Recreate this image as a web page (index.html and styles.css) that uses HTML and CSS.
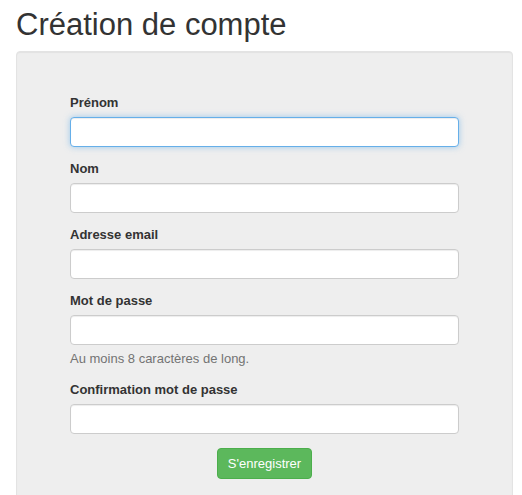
FILE: index.html
```html
<!DOCTYPE html>
<html lang="fr">
<head>
<meta charset="utf-8">
<title>Création de compte</title>
<link rel="stylesheet" href="styles.css">
</head>
<body>
<h1 class="page-title">Création de compte</h1>
<div class="well">
  <form class="signup-form">
    <div class="form-group">
      <label class="form-label" for="prenom">Prénom</label>
      <input class="form-control is-focused" id="prenom" type="text">
    </div>
    <div class="form-group">
      <label class="form-label" for="nom">Nom</label>
      <input class="form-control" id="nom" type="text">
    </div>
    <div class="form-group">
      <label class="form-label" for="email">Adresse email</label>
      <input class="form-control" id="email" type="email">
    </div>
    <div class="form-group">
      <label class="form-label" for="pw">Mot de passe</label>
      <input class="form-control" id="pw" type="password">
      <p class="help-block">Au moins 8 caractères de long.</p>
    </div>
    <div class="form-group">
      <label class="form-label" for="pw2">Confirmation mot de passe</label>
      <input class="form-control" id="pw2" type="password">
    </div>
    <div class="form-actions">
      <button class="btn-success" type="button">S'enregistrer</button>
    </div>
  </form>
</div>
</body>
</html>
```
FILE: styles.css
```css
* { box-sizing: border-box; }
html, body { height: 100%; }
body {
  margin: 0;
  padding: 8px 9px 0 16px;
  font-family: "Liberation Sans", Arial, sans-serif;
  font-size: 13px;
  line-height: 18px;
  color: #333;
  background: #fff;
  overflow: hidden;
}
.page-title {
  margin: 0 0 9px;
  font-size: 31px;
  font-weight: 400;
  line-height: 34px;
  color: #333;
}
.well {
  height: calc(100% - 43px + 6px);
  background: #eeeeee;
  border: 1px solid #e3e3e3;
  border-radius: 4px;
  box-shadow: inset 0 1px 1px rgba(0,0,0,.05);
  padding: 42px 53px 0;
}
.form-group { margin-bottom: 13px; }
.form-label {
  display: block;
  font-weight: 700;
  line-height: 18px;
  margin-bottom: 5px;
  color: #333;
}
.form-control {
  display: block;
  width: 100%;
  height: 30px;
  padding: 5px 10px;
  font: inherit;
  color: #555;
  background: #fff;
  border: 1px solid #ccc;
  border-radius: 4px;
  box-shadow: inset 0 1px 1px rgba(0,0,0,.075);
  outline: none;
}
.form-control.is-focused {
  border-color: #66afe9;
  box-shadow: inset 0 1px 1px rgba(0,0,0,.075), 0 0 6px rgba(102,175,233,.6);
}
.help-block {
  margin: 5px 0 0;
  color: #737373;
  line-height: 18px;
}
.form-actions {
  display: flex;
  justify-content: center;
  margin-top: 14px;
}
.btn-success {
  font: inherit;
  line-height: 19px;
  padding: 5px 10px;
  color: #fff;
  background: #5cb85c;
  border: 1px solid #4cae4c;
  border-radius: 4px;
  cursor: pointer;
}
```
